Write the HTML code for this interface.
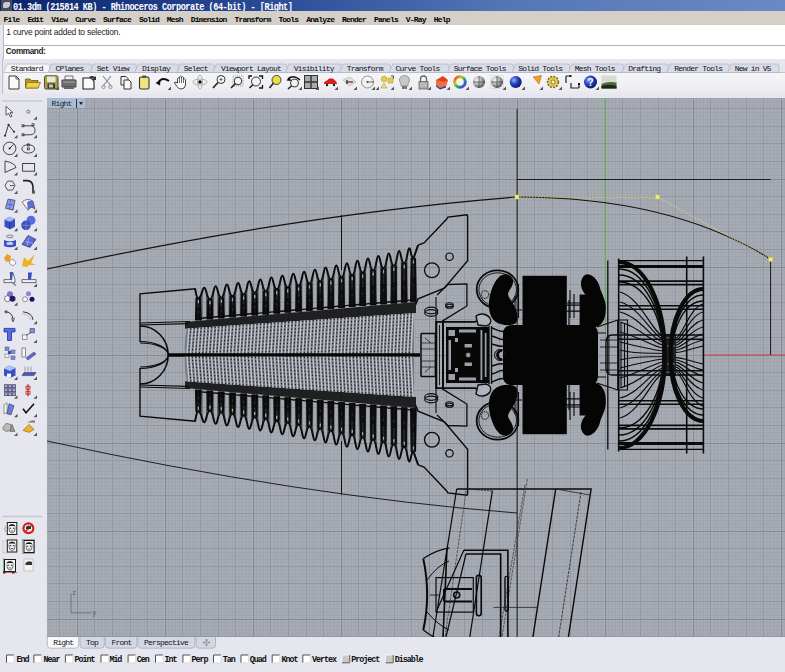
<!DOCTYPE html><html><head><meta charset="utf-8"><style>
*{margin:0;padding:0;box-sizing:border-box}
html,body{width:785px;height:672px;overflow:hidden;background:#e6e6ee;font-family:"Liberation Sans",sans-serif;position:relative}
.a{position:absolute;white-space:pre}
.m{font-family:"Liberation Mono",monospace}
#title{left:0;top:0;width:785px;height:11px;background:linear-gradient(90deg,#0a246a 0%,#2c4c98 35%,#5576b6 65%,#6a8ac4 100%)}
#menu{left:0;top:11px;width:785px;height:14px;background:#d4d0c8}
#cmd{left:3px;top:25px;width:782px;height:34px;background:#fff;border-left:1px solid #b8b8c0}
#vp{left:47px;top:98px;width:738px;height:538px;overflow:hidden}
.mt{font-size:8px;letter-spacing:-0.817px;color:#000;top:13.8px;font-weight:bold}
.tab{font-size:8px;letter-spacing:-0.8px;color:#111;top:63px}
.os{font-size:8px;letter-spacing:-0.8px;color:#111;top:653px}
.cb{width:8px;height:8px;border:1px solid #444;background:#fff;top:654px}
</style></head><body>
<div id="title" class="a"></div>
<div class="a" style="left:1px;top:0;width:11px;height:11px;background:#4a4a58"></div><div class="a" style="left:3px;top:2px;width:7px;height:6px;background:#c8c8d0;border-radius:3px 1px 4px 1px"></div>
<div class="a m" style="left:13px;top:2px;font-size:8.6px;font-weight:bold;letter-spacing:-0.5px;color:#fff;line-height:11px;transform:scaleY(1.2);transform-origin:0 0">01.3dm (215814 KB) - Rhinoceros Corporate (64-bit) - [Right]</div>
<div id="menu" class="a"></div>
<div class="a m mt" style="left:3.5px;line-height:11px">File  Edit  View  Curve  Surface  Solid  Mesh  Dimension  Transform  Tools  Analyze  Render  Panels  V-Ray  Help</div>
<div id="cmd" class="a"></div>
<div class="a" style="left:4px;top:44.5px;width:781px;height:1px;background:#b4b4bc"></div>
<div class="a" style="left:6.3px;top:27px;font-size:8.4px;letter-spacing:-0.2px;color:#222;line-height:10px">1 curve point added to selection.</div>
<div class="a" style="left:5.8px;top:46.8px;font-size:8.2px;font-weight:bold;letter-spacing:-0.4px;color:#222;line-height:10px">Command:</div>

<div class="a" style="left:3.5px;top:72.3px;width:782px;height:22px;background:linear-gradient(180deg,#f6f6f9 0%,#f0f0f4 60%,#e8e8ee 100%)"></div>
<div class="a" style="left:2px;top:58px;width:1.3px;height:36px;background:#c4c4cc"></div>
<svg class="a" style="left:0;top:0" width="785" height="672" viewBox="0 0 785 672">
<defs><clipPath id="vc"><rect x="47" y="98" width="738" height="539"/></clipPath></defs>
<path d="M3.5 72.5 L7 64 H47.7 Q49.7 64 49.7 66 V72.5Z" fill="#f6f6fa" stroke="#b4b8c8" stroke-width="0.8"/>
<path d="M48.2 72.5 L51.7 64 H89.7 Q91.7 64 91.7 66 V72.5Z" fill="#d9dce8" stroke="#b4b8c8" stroke-width="0.8"/>
<path d="M90.2 72.5 L93.7 64 H134.3 Q136.3 64 136.3 66 V72.5Z" fill="#d9dce8" stroke="#b4b8c8" stroke-width="0.8"/>
<path d="M134.8 72.5 L138.3 64 H176.3 Q178.3 64 178.3 66 V72.5Z" fill="#d9dce8" stroke="#b4b8c8" stroke-width="0.8"/>
<path d="M176.8 72.5 L180.3 64 H212.4 Q214.4 64 214.4 66 V72.5Z" fill="#d9dce8" stroke="#b4b8c8" stroke-width="0.8"/>
<path d="M212.9 72.5 L216.4 64 H285 Q287 64 287 66 V72.5Z" fill="#d9dce8" stroke="#b4b8c8" stroke-width="0.8"/>
<path d="M285.5 72.5 L289 64 H339 Q341 64 341 66 V72.5Z" fill="#d9dce8" stroke="#b4b8c8" stroke-width="0.8"/>
<path d="M339.5 72.5 L343 64 H388.7 Q390.7 64 390.7 66 V72.5Z" fill="#d9dce8" stroke="#b4b8c8" stroke-width="0.8"/>
<path d="M389.2 72.5 L392.7 64 H447 Q449 64 449 66 V72.5Z" fill="#d9dce8" stroke="#b4b8c8" stroke-width="0.8"/>
<path d="M447.5 72.5 L451 64 H511.5 Q513.5 64 513.5 66 V72.5Z" fill="#d9dce8" stroke="#b4b8c8" stroke-width="0.8"/>
<path d="M512.0 72.5 L515.5 64 H567.9 Q569.9 64 569.9 66 V72.5Z" fill="#d9dce8" stroke="#b4b8c8" stroke-width="0.8"/>
<path d="M568.4 72.5 L571.9 64 H621.6 Q623.6 64 623.6 66 V72.5Z" fill="#d9dce8" stroke="#b4b8c8" stroke-width="0.8"/>
<path d="M622.1 72.5 L625.6 64 H666.3 Q668.3 64 668.3 66 V72.5Z" fill="#d9dce8" stroke="#b4b8c8" stroke-width="0.8"/>
<path d="M666.8 72.5 L670.3 64 H727.2 Q729.2 64 729.2 66 V72.5Z" fill="#d9dce8" stroke="#b4b8c8" stroke-width="0.8"/>
<path d="M727.7 72.5 L731.2 64 H777 Q779 64 779 66 V72.5Z" fill="#d9dce8" stroke="#b4b8c8" stroke-width="0.8"/>
<path d="M49.7 72.5 H785" stroke="#b4b8c8" stroke-width="0.8"/>
<path d="M47.3 636.5 V645 Q47.3 648.2 50.3 648.2 H75.7 Q78.7 648.2 78.7 645 V636.5" fill="#f8f8fc" stroke="#a8acbc" stroke-width="0.8"/>
<path d="M80 636.5 V645 Q80 648.2 83 648.2 H101.2 Q104.2 648.2 104.2 645 V636.5" fill="#d4d8e4" stroke="#a8acbc" stroke-width="0.8"/>
<path d="M105.4 636.5 V645 Q105.4 648.2 108.4 648.2 H133.9 Q136.9 648.2 136.9 645 V636.5" fill="#d4d8e4" stroke="#a8acbc" stroke-width="0.8"/>
<path d="M138 636.5 V645 Q138 648.2 141 648.2 H192 Q195 648.2 195 645 V636.5" fill="#d4d8e4" stroke="#a8acbc" stroke-width="0.8"/>
<path d="M196 636.5 V645 Q196 648.2 199 648.2 H212.5 Q215.5 648.2 215.5 645 V636.5" fill="#d4d8e4" stroke="#a8acbc" stroke-width="0.8"/>
<path d="M203 642.5 H210 M206.5 639 V646" stroke="#888" stroke-width="1.6"/><circle cx="206.5" cy="642.5" r="1.6" fill="#bbb"/>
<rect x="6.5" y="655" width="7.5" height="7.8" fill="#fff"/>
<path d="M6.5 662.8 V655 H14" fill="none" stroke="#505050" stroke-width="1"/>
<path d="M14 655 V662.8 H6.5" fill="none" stroke="#d8d8e0" stroke-width="0.8"/>
<rect x="33.9" y="655" width="7.5" height="7.8" fill="#fff"/>
<path d="M33.9 662.8 V655 H41.4" fill="none" stroke="#505050" stroke-width="1"/>
<path d="M41.4 655 V662.8 H33.9" fill="none" stroke="#d8d8e0" stroke-width="0.8"/>
<rect x="65.4" y="655" width="7.5" height="7.8" fill="#fff"/>
<path d="M65.4 662.8 V655 H72.9" fill="none" stroke="#505050" stroke-width="1"/>
<path d="M72.9 655 V662.8 H65.4" fill="none" stroke="#d8d8e0" stroke-width="0.8"/>
<rect x="101.0" y="655" width="7.5" height="7.8" fill="#fff"/>
<path d="M101.0 662.8 V655 H108.5" fill="none" stroke="#505050" stroke-width="1"/>
<path d="M108.5 655 V662.8 H101.0" fill="none" stroke="#d8d8e0" stroke-width="0.8"/>
<rect x="128.1" y="655" width="7.5" height="7.8" fill="#fff"/>
<path d="M128.1 662.8 V655 H135.6" fill="none" stroke="#505050" stroke-width="1"/>
<path d="M135.6 655 V662.8 H128.1" fill="none" stroke="#d8d8e0" stroke-width="0.8"/>
<rect x="155.5" y="655" width="7.5" height="7.8" fill="#fff"/>
<path d="M155.5 662.8 V655 H163" fill="none" stroke="#505050" stroke-width="1"/>
<path d="M163 655 V662.8 H155.5" fill="none" stroke="#d8d8e0" stroke-width="0.8"/>
<rect x="182.9" y="655" width="7.5" height="7.8" fill="#fff"/>
<path d="M182.9 662.8 V655 H190.4" fill="none" stroke="#505050" stroke-width="1"/>
<path d="M190.4 655 V662.8 H182.9" fill="none" stroke="#d8d8e0" stroke-width="0.8"/>
<rect x="213.5" y="655" width="7.5" height="7.8" fill="#fff"/>
<path d="M213.5 662.8 V655 H221" fill="none" stroke="#505050" stroke-width="1"/>
<path d="M221 655 V662.8 H213.5" fill="none" stroke="#d8d8e0" stroke-width="0.8"/>
<rect x="241.0" y="655" width="7.5" height="7.8" fill="#fff"/>
<path d="M241.0 662.8 V655 H248.5" fill="none" stroke="#505050" stroke-width="1"/>
<path d="M248.5 655 V662.8 H241.0" fill="none" stroke="#d8d8e0" stroke-width="0.8"/>
<rect x="272.2" y="655" width="7.5" height="7.8" fill="#fff"/>
<path d="M272.2 662.8 V655 H279.7" fill="none" stroke="#505050" stroke-width="1"/>
<path d="M279.7 655 V662.8 H272.2" fill="none" stroke="#d8d8e0" stroke-width="0.8"/>
<rect x="302.8" y="655" width="7.5" height="7.8" fill="#fff"/>
<path d="M302.8 662.8 V655 H310.3" fill="none" stroke="#505050" stroke-width="1"/>
<path d="M310.3 655 V662.8 H302.8" fill="none" stroke="#d8d8e0" stroke-width="0.8"/>
<rect x="342" y="655" width="7.7" height="7.8" fill="#c8c8cc"/>
<path d="M342 662.8 V655 H349.7" fill="none" stroke="#fafafa" stroke-width="0.8"/>
<path d="M349.7 655 V662.8 H342" fill="none" stroke="#606060" stroke-width="1"/>
<rect x="385.5" y="655" width="7.7" height="7.8" fill="#c8c8cc"/>
<path d="M385.5 662.8 V655 H393.2" fill="none" stroke="#fafafa" stroke-width="0.8"/>
<path d="M393.2 655 V662.8 H385.5" fill="none" stroke="#606060" stroke-width="1"/>
<g clip-path="url(#vc)">
<rect x="47" y="98" width="738" height="539" fill="#a7abb3"/>
<path d="M45.50 98V637M49.50 98V637M52.50 98V637M56.50 98V637M63.50 98V637M66.50 98V637M70.50 98V637M73.50 98V637M80.50 98V637M84.50 98V637M87.50 98V637M91.50 98V637M98.50 98V637M101.50 98V637M105.50 98V637M108.50 98V637M116.50 98V637M119.50 98V637M123.50 98V637M126.50 98V637M133.50 98V637M137.50 98V637M140.50 98V637M144.50 98V637M151.50 98V637M154.50 98V637M158.50 98V637M161.50 98V637M168.50 98V637M172.50 98V637M175.50 98V637M179.50 98V637M186.50 98V637M189.50 98V637M193.50 98V637M196.50 98V637M204.50 98V637M207.50 98V637M211.50 98V637M214.50 98V637M221.50 98V637M225.50 98V637M228.50 98V637M232.50 98V637M239.50 98V637M242.50 98V637M246.50 98V637M249.50 98V637M256.50 98V637M260.50 98V637M263.50 98V637M267.50 98V637M274.50 98V637M277.50 98V637M281.50 98V637M284.50 98V637M292.50 98V637M295.50 98V637M299.50 98V637M302.50 98V637M309.50 98V637M313.50 98V637M316.50 98V637M320.50 98V637M327.50 98V637M330.50 98V637M334.50 98V637M337.50 98V637M344.50 98V637M348.50 98V637M351.50 98V637M355.50 98V637M362.50 98V637M365.50 98V637M369.50 98V637M372.50 98V637M380.50 98V637M383.50 98V637M387.50 98V637M390.50 98V637M397.50 98V637M401.50 98V637M404.50 98V637M408.50 98V637M415.50 98V637M418.50 98V637M422.50 98V637M425.50 98V637M432.50 98V637M436.50 98V637M439.50 98V637M443.50 98V637M450.50 98V637M453.50 98V637M457.50 98V637M460.50 98V637M468.50 98V637M471.50 98V637M475.50 98V637M478.50 98V637M485.50 98V637M489.50 98V637M492.50 98V637M496.50 98V637M503.50 98V637M506.50 98V637M510.50 98V637M513.50 98V637M520.50 98V637M524.50 98V637M527.50 98V637M531.50 98V637M538.50 98V637M541.50 98V637M545.50 98V637M548.50 98V637M556.50 98V637M559.50 98V637M563.50 98V637M566.50 98V637M573.50 98V637M577.50 98V637M580.50 98V637M584.50 98V637M591.50 98V637M594.50 98V637M598.50 98V637M601.50 98V637M608.50 98V637M612.50 98V637M615.50 98V637M619.50 98V637M626.50 98V637M629.50 98V637M633.50 98V637M636.50 98V637M644.50 98V637M647.50 98V637M651.50 98V637M654.50 98V637M661.50 98V637M665.50 98V637M668.50 98V637M672.50 98V637M679.50 98V637M682.50 98V637M686.50 98V637M689.50 98V637M696.50 98V637M700.50 98V637M703.50 98V637M707.50 98V637M714.50 98V637M717.50 98V637M721.50 98V637M724.50 98V637M732.50 98V637M735.50 98V637M739.50 98V637M742.50 98V637M749.50 98V637M753.50 98V637M756.50 98V637M760.50 98V637M767.50 98V637M770.50 98V637M774.50 98V637M777.50 98V637M784.50 98V637M788.50 98V637M47 94.50H785M47 98.50H785M47 101.50H785M47 105.50H785M47 112.50H785M47 115.50H785M47 119.50H785M47 122.50H785M47 129.50H785M47 133.50H785M47 136.50H785M47 140.50H785M47 147.50H785M47 150.50H785M47 154.50H785M47 157.50H785M47 164.50H785M47 168.50H785M47 171.50H785M47 175.50H785M47 182.50H785M47 186.50H785M47 189.50H785M47 193.50H785M47 200.50H785M47 203.50H785M47 207.50H785M47 210.50H785M47 217.50H785M47 221.50H785M47 224.50H785M47 228.50H785M47 235.50H785M47 238.50H785M47 242.50H785M47 245.50H785M47 252.50H785M47 256.50H785M47 259.50H785M47 263.50H785M47 270.50H785M47 274.50H785M47 277.50H785M47 281.50H785M47 288.50H785M47 291.50H785M47 295.50H785M47 298.50H785M47 305.50H785M47 309.50H785M47 312.50H785M47 316.50H785M47 323.50H785M47 326.50H785M47 330.50H785M47 333.50H785M47 340.50H785M47 344.50H785M47 347.50H785M47 351.50H785M47 358.50H785M47 362.50H785M47 365.50H785M47 369.50H785M47 376.50H785M47 379.50H785M47 383.50H785M47 386.50H785M47 393.50H785M47 397.50H785M47 400.50H785M47 404.50H785M47 411.50H785M47 414.50H785M47 418.50H785M47 421.50H785M47 428.50H785M47 432.50H785M47 435.50H785M47 439.50H785M47 446.50H785M47 450.50H785M47 453.50H785M47 457.50H785M47 464.50H785M47 467.50H785M47 471.50H785M47 474.50H785M47 481.50H785M47 485.50H785M47 488.50H785M47 492.50H785M47 499.50H785M47 502.50H785M47 506.50H785M47 509.50H785M47 516.50H785M47 520.50H785M47 523.50H785M47 527.50H785M47 534.50H785M47 538.50H785M47 541.50H785M47 545.50H785M47 552.50H785M47 555.50H785M47 559.50H785M47 562.50H785M47 569.50H785M47 573.50H785M47 576.50H785M47 580.50H785M47 587.50H785M47 590.50H785M47 594.50H785M47 597.50H785M47 604.50H785M47 608.50H785M47 611.50H785M47 615.50H785M47 622.50H785M47 626.50H785M47 629.50H785M47 633.50H785M47 640.50H785" stroke="#a0a4ac" stroke-width="1" fill="none"/>
<path d="M42.50 98V637M59.50 98V637M94.50 98V637M112.50 98V637M130.50 98V637M147.50 98V637M182.50 98V637M200.50 98V637M218.50 98V637M235.50 98V637M270.50 98V637M288.50 98V637M306.50 98V637M323.50 98V637M358.50 98V637M376.50 98V637M394.50 98V637M411.50 98V637M446.50 98V637M464.50 98V637M482.50 98V637M499.50 98V637M534.50 98V637M552.50 98V637M570.50 98V637M587.50 98V637M622.50 98V637M640.50 98V637M658.50 98V637M675.50 98V637M710.50 98V637M728.50 98V637M746.50 98V637M763.50 98V637M798.50 98V637M47 108.50H785M47 126.50H785M47 143.50H785M47 161.50H785M47 196.50H785M47 214.50H785M47 231.50H785M47 249.50H785M47 284.50H785M47 302.50H785M47 319.50H785M47 337.50H785M47 372.50H785M47 390.50H785M47 407.50H785M47 425.50H785M47 460.50H785M47 478.50H785M47 495.50H785M47 513.50H785M47 548.50H785M47 566.50H785M47 583.50H785M47 601.50H785M47 636.50H785M47 654.50H785" stroke="#93979f" stroke-width="1" fill="none"/>
<path d="M77.50 98V637M165.50 98V637M253.50 98V637M341.50 98V637M429.50 98V637M517.50 98V637M605.50 98V637M693.50 98V637M781.50 98V637M47 91.50H785M47 179.50H785M47 267.50H785M47 355.50H785M47 443.50H785M47 531.50H785M47 619.50H785" stroke="#888c95" stroke-width="1" fill="none"/>
<path d="M605.3 98V330" stroke="#5cae5c" stroke-width="1.2"/>
<path d="M704 355.0H785" stroke="#c84040" stroke-width="1.2"/>
<path d="M47 269 Q 300 214 517 197" stroke="#111" fill="none" stroke-width="1.2"/>
<path d="M47 441 Q 300 496 517 513" stroke="#111" fill="none" stroke-width="0.9"/>
<path d="M517 197 C 610 197 700 215 770.6 259.3" stroke="#111" fill="none" stroke-width="1.1"/>
<path d="M517.1 108.9V637" stroke="#1a1a1a" fill="none" stroke-width="1"/>
<path d="M517 179.5H770.6" stroke="#1a1a1a" fill="none" stroke-width="1"/>
<path d="M770.6 259.3V355" stroke="#1a1a1a" fill="none" stroke-width="1"/>
<path d="M341.5 215V270M341.5 441V495" stroke="#111" fill="none" stroke-width="1"/>
<path d="M517 197 L657.5 197 L770.6 259.3" stroke="#e8e860" stroke-width="0.8" stroke-dasharray="1.5 1.5" fill="none"/>
<rect x="515" y="195" width="4" height="4" fill="#f0f070" stroke="#c8c850" stroke-width="0.5"/>
<rect x="655.5" y="195" width="4" height="4" fill="#f0f070" stroke="#c8c850" stroke-width="0.5"/>
<rect x="768.6" y="257.3" width="4" height="4" fill="#f0f070" stroke="#c8c850" stroke-width="0.5"/>
<path d="M71 593.4 V612.8 H91.2" fill="none" stroke="#6a6e78" stroke-width="0.9"/>
<text x="72.5" y="594.5" font-family="Liberation Sans" font-size="6.5" fill="#5a5e68">z</text>
<text x="92.5" y="614.5" font-family="Liberation Sans" font-size="7" fill="#5a5e68">y</text>
<g id="uh"><path d="M195.5 288.8 L140 293.8 L140 342" stroke="#0a0a0a" fill="none" stroke-width="1.4"/>
<path d="M140 323 L190 321.5 M140 325 L188 323.6" stroke="#0a0a0a" fill="none" stroke-width="1.1"/>
<path d="M140 326 A28.2 29 0 0 1 168.2 355" stroke="#0a0a0a" fill="none" stroke-width="1.5"/>
<path d="M140 341.5 A28.2 13.5 0 0 1 168.2 355 M140 343 A28.2 12 0 0 1 168.2 355" stroke="#0a0a0a" fill="none" stroke-width="1.1"/>
<path d="M194.9 288.75 C196 290 195.80 298.30 198.30 298.30 C202.02 298.30 201.90 287.70 204.30 287.70 C206.56 287.70 206.45 299.20 209.96 299.20 C213.47 299.20 213.36 286.17 215.62 286.17 C217.87 286.17 217.76 297.71 221.25 297.71 C224.74 297.71 224.63 284.58 226.88 284.58 C229.12 284.58 229.01 296.16 232.48 296.16 C235.96 296.16 235.84 282.93 238.08 282.93 C240.31 282.93 240.20 294.55 243.66 294.55 C247.11 294.55 247.00 281.22 249.23 281.22 C251.44 281.22 251.33 292.88 254.77 292.88 C258.21 292.88 258.10 279.45 260.31 279.45 C262.52 279.45 262.41 291.15 265.83 291.15 C269.24 291.15 269.13 277.62 271.34 277.62 C273.53 277.62 273.42 289.35 276.82 289.35 C280.22 289.35 280.11 275.73 282.30 275.73 C284.49 275.73 284.38 287.50 287.76 287.50 C291.14 287.50 291.03 273.78 293.21 273.78 C295.38 273.78 295.27 285.59 298.64 285.59 C302.00 285.59 301.89 271.77 304.06 271.77 C306.22 271.77 306.11 283.62 309.46 283.62 C312.80 283.62 312.69 269.70 314.85 269.70 C317.00 269.70 316.89 281.59 320.22 281.59 C323.54 281.59 323.43 267.57 325.58 267.57 C327.71 267.57 327.61 279.50 330.92 279.50 C334.22 279.50 334.12 265.38 336.25 265.38 C338.37 265.38 338.27 277.34 341.56 277.34 C344.85 277.34 344.74 263.13 346.86 263.13 C348.98 263.13 348.87 275.13 352.14 275.13 C355.41 275.13 355.31 260.82 357.42 260.82 C359.52 260.82 359.41 272.86 362.67 272.86 C365.92 272.86 365.81 258.45 367.91 258.45 C370.00 258.45 369.90 270.53 373.13 270.53 C376.37 270.53 376.26 256.02 378.35 256.02 C380.42 256.02 380.32 268.14 383.54 268.14 C386.75 268.14 386.65 253.53 388.72 253.53 C390.79 253.53 390.68 265.69 393.88 265.69 C397.08 265.69 396.98 250.98 399.04 250.98 C401.09 250.98 400.99 263.18 404.17 263.18 C407.35 263.18 407.25 248.37 409.30 248.37 C410.94 248.37 410.86 258.60 413.40 258.60 L418.1 245.2" stroke="#0a0a0a" fill="none" stroke-width="2"/>
<path d="M196.40 297.80L195.90 320.22M200.20 297.80L200.70 320.22M208.06 298.70L207.56 319.21M211.86 298.70L212.36 319.21M219.35 297.21L218.85 318.24M223.15 297.21L223.65 318.24M230.58 295.66L230.08 317.28M234.38 295.66L234.88 317.28M241.76 294.05L241.26 316.32M245.56 294.05L246.06 316.32M252.87 292.38L252.37 315.36M256.67 292.38L257.17 315.36M263.93 290.65L263.43 314.41M267.73 290.65L268.23 314.41M274.92 288.85L274.42 313.47M278.72 288.85L279.22 313.47M285.86 287.00L285.36 312.53M289.66 287.00L290.16 312.53M296.74 285.09L296.24 311.59M300.54 285.09L301.04 311.59M307.56 283.12L307.06 310.66M311.36 283.12L311.86 310.66M318.32 281.09L317.82 309.73M322.12 281.09L322.62 309.73M329.02 279.00L328.52 308.81M332.82 279.00L333.32 308.81M339.66 276.84L339.16 307.90M343.46 276.84L343.96 307.90M350.24 274.63L349.74 306.99M354.04 274.63L354.54 306.99M360.77 272.36L360.27 306.09M364.57 272.36L365.07 306.09M371.23 270.03L370.73 305.19M375.03 270.03L375.53 305.19M381.64 267.64L381.14 304.29M385.44 267.64L385.94 304.29M391.98 265.19L391.48 303.40M395.78 265.19L396.28 303.40M402.27 262.68L401.77 302.52M406.07 262.68L406.57 302.52M411.50 258.10L411.00 301.72M415.30 258.10L415.80 301.72" stroke="#0a0a0a" fill="none" stroke-width="1.6"/>
<path d="M196.40 299.30L200.20 299.30L200.90 320.22L195.70 320.22ZM208.06 300.20L211.86 300.20L212.56 319.21L207.36 319.21ZM219.35 298.71L223.15 298.71L223.85 318.24L218.65 318.24ZM230.58 297.16L234.38 297.16L235.08 317.28L229.88 317.28ZM241.76 295.55L245.56 295.55L246.26 316.32L241.06 316.32ZM252.87 293.88L256.67 293.88L257.37 315.36L252.17 315.36ZM263.93 292.15L267.73 292.15L268.43 314.41L263.23 314.41ZM274.92 290.35L278.72 290.35L279.42 313.47L274.22 313.47ZM285.86 288.50L289.66 288.50L290.36 312.53L285.16 312.53ZM296.74 286.59L300.54 286.59L301.24 311.59L296.04 311.59ZM307.56 284.62L311.36 284.62L312.06 310.66L306.86 310.66ZM318.32 282.59L322.12 282.59L322.82 309.73L317.62 309.73ZM329.02 280.50L332.82 280.50L333.52 308.81L328.32 308.81ZM339.66 278.34L343.46 278.34L344.16 307.90L338.96 307.90ZM350.24 276.13L354.04 276.13L354.74 306.99L349.54 306.99ZM360.77 273.86L364.57 273.86L365.27 306.09L360.07 306.09ZM371.23 271.53L375.03 271.53L375.73 305.19L370.53 305.19ZM381.64 269.14L385.44 269.14L386.14 304.29L380.94 304.29ZM391.98 266.69L395.78 266.69L396.48 303.40L391.28 303.40ZM402.27 264.18L406.07 264.18L406.77 302.52L401.57 302.52ZM411.50 259.60L415.30 259.60L416.00 301.72L410.80 301.72Z" fill="#0a0a0a" opacity="0.82"/>
<path d="M197.50 300.30H199.10V303.30H197.50ZM197.80 310.85H198.80V313.35H197.80ZM209.16 301.20H210.76V304.20H209.16ZM209.46 310.61H210.46V313.11H209.46ZM220.45 299.71H222.05V302.71H220.45ZM220.75 309.43H221.75V311.93H220.75ZM231.68 298.16H233.28V301.16H231.68ZM231.98 308.23H232.98V310.73H231.98ZM242.86 296.55H244.46V299.55H242.86ZM243.16 307.01H244.16V309.51H243.16ZM253.97 294.88H255.57V297.88H253.97ZM254.27 305.77H255.27V308.27H254.27ZM265.03 293.15H266.63V296.15H265.03ZM265.33 304.50H266.33V307.00H265.33ZM276.02 291.35H277.62V294.35H276.02ZM276.32 303.22H277.32V305.72H276.32ZM286.96 289.50H288.56V292.50H286.96ZM287.26 301.92H288.26V304.42H287.26ZM297.84 287.59H299.44V290.59H297.84ZM298.14 300.59H299.14V303.09H298.14ZM308.66 285.62H310.26V288.62H308.66ZM308.96 299.24H309.96V301.74H308.96ZM319.42 283.59H321.02V286.59H319.42ZM319.72 297.88H320.72V300.38H319.72ZM330.12 281.50H331.72V284.50H330.12ZM330.42 296.49H331.42V298.99H330.42ZM340.76 279.34H342.36V282.34H340.76ZM341.06 295.08H342.06V297.58H341.06ZM351.34 277.13H352.94V280.13H351.34ZM351.64 293.65H352.64V296.15H351.64ZM361.87 274.86H363.47V277.86H361.87ZM362.17 292.20H363.17V294.70H362.17ZM372.33 272.53H373.93V275.53H372.33ZM372.63 290.72H373.63V293.22H372.63ZM382.74 270.14H384.34V273.14H382.74ZM383.04 289.23H384.04V291.73H383.04ZM393.08 267.69H394.68V270.69H393.08ZM393.38 287.72H394.38V290.22H393.38ZM403.37 265.18H404.97V268.18H403.37ZM403.67 286.18H404.67V288.68H403.67ZM412.60 260.60H414.20V263.60H412.60ZM412.90 283.87H413.90V286.37H412.90Z" fill="#a4a8b0"/>
<path d="M202.10 294.70V318.70M206.50 294.70V318.70M213.42 293.17V317.73M217.82 293.17V317.73M224.68 291.58V316.76M229.08 291.58V316.76M235.88 289.93V315.80M240.28 289.93V315.80M247.03 288.22V314.84M251.43 288.22V314.84M258.11 286.45V313.88M262.51 286.45V313.88M269.14 284.62V312.94M273.54 284.62V312.94M280.10 282.73V311.99M284.50 282.73V311.99M291.01 280.78V311.06M295.41 280.78V311.06M301.86 278.77V310.12M306.26 278.77V310.12M312.65 276.70V309.20M317.05 276.70V309.20M323.38 274.57V308.27M327.78 274.57V308.27M334.05 272.38V307.36M338.45 272.38V307.36M344.66 270.13V306.44M349.06 270.13V306.44M355.22 267.82V305.54M359.62 267.82V305.54M365.71 265.45V304.63M370.11 265.45V304.63M376.15 263.02V303.74M380.55 263.02V303.74M386.52 260.53V302.84M390.92 260.53V302.84M396.84 257.98V301.96M401.24 257.98V301.96M407.10 255.37V301.08M411.50 255.37V301.08" stroke="#1a1a1a" fill="none" stroke-width="0.7" opacity="0.6"/>
<path d="M196.60 298.30L196.10 320.22M200.00 298.30L200.50 320.22M208.26 299.20L207.76 319.21M211.66 299.20L212.16 319.21M219.55 297.71L219.05 318.24M222.95 297.71L223.45 318.24M230.78 296.16L230.28 317.28M234.18 296.16L234.68 317.28M241.96 294.55L241.46 316.32M245.36 294.55L245.86 316.32M253.07 292.88L252.57 315.36M256.47 292.88L256.97 315.36M264.13 291.15L263.63 314.41M267.53 291.15L268.03 314.41M275.12 289.35L274.62 313.47M278.52 289.35L279.02 313.47M286.06 287.50L285.56 312.53M289.46 287.50L289.96 312.53M296.94 285.59L296.44 311.59M300.34 285.59L300.84 311.59M307.76 283.62L307.26 310.66M311.16 283.62L311.66 310.66M318.52 281.59L318.02 309.73M321.92 281.59L322.42 309.73M329.22 279.50L328.72 308.81M332.62 279.50L333.12 308.81M339.86 277.34L339.36 307.90M343.26 277.34L343.76 307.90M350.44 275.13L349.94 306.99M353.84 275.13L354.34 306.99M360.97 272.86L360.47 306.09M364.37 272.86L364.87 306.09M371.43 270.53L370.93 305.19M374.83 270.53L375.33 305.19M381.84 268.14L381.34 304.29M385.24 268.14L385.74 304.29M392.18 265.69L391.68 303.40M395.58 265.69L396.08 303.40M402.47 263.18L401.97 302.52M405.87 263.18L406.37 302.52M411.70 258.60L411.20 301.72M415.10 258.60L415.60 301.72" stroke="#0a0a0a" fill="none" stroke-width="1.7"/>
<path d="M196.40 307.71L200.20 307.71L200.90 320.22L195.70 320.22ZM208.06 307.76L211.86 307.76L212.56 319.21L207.36 319.21ZM219.35 306.50L223.15 306.50L223.85 318.24L218.65 318.24ZM230.58 305.21L234.38 305.21L235.08 317.28L229.88 317.28ZM241.76 303.89L245.56 303.89L246.26 316.32L241.06 316.32ZM252.87 302.55L256.67 302.55L257.37 315.36L252.17 315.36ZM263.93 301.16L267.73 301.16L268.43 314.41L263.23 314.41ZM274.92 299.75L278.72 299.75L279.42 313.47L274.22 313.47ZM285.86 298.31L289.66 298.31L290.36 312.53L285.16 312.53ZM296.74 296.84L300.54 296.84L301.24 311.59L296.04 311.59ZM307.56 295.34L311.36 295.34L312.06 310.66L306.86 310.66ZM318.32 293.80L322.12 293.80L322.82 309.73L317.62 309.73ZM329.02 292.24L332.82 292.24L333.52 308.81L328.32 308.81ZM339.66 290.64L343.46 290.64L344.16 307.90L338.96 307.90ZM350.24 289.02L354.04 289.02L354.74 306.99L349.54 306.99ZM360.77 287.36L364.57 287.36L365.27 306.09L360.07 306.09ZM371.23 285.67L375.03 285.67L375.73 305.19L370.53 305.19ZM381.64 283.96L385.44 283.96L386.14 304.29L380.94 304.29ZM391.98 282.21L395.78 282.21L396.48 303.40L391.28 303.40ZM402.27 280.43L406.07 280.43L406.77 302.52L401.57 302.52ZM411.50 277.56L415.30 277.56L416.00 301.72L410.80 301.72Z" fill="#0a0a0a" opacity="0.75"/>
<path d="M201.70 293.70V318.70M206.90 293.70V318.70M213.02 292.17V317.73M218.22 292.17V317.73M224.28 290.58V316.76M229.48 290.58V316.76M235.48 288.93V315.80M240.68 288.93V315.80M246.63 287.22V314.84M251.83 287.22V314.84M257.71 285.45V313.88M262.91 285.45V313.88M268.74 283.62V312.94M273.94 283.62V312.94M279.70 281.73V311.99M284.90 281.73V311.99M290.61 279.78V311.06M295.81 279.78V311.06M301.46 277.77V310.12M306.66 277.77V310.12M312.25 275.70V309.20M317.45 275.70V309.20M322.98 273.57V308.27M328.18 273.57V308.27M333.65 271.38V307.36M338.85 271.38V307.36M344.26 269.13V306.44M349.46 269.13V306.44M354.82 266.82V305.54M360.02 266.82V305.54M365.31 264.45V304.63M370.51 264.45V304.63M375.75 262.02V303.74M380.95 262.02V303.74M386.12 259.53V302.84M391.32 259.53V302.84M396.44 256.98V301.96M401.64 256.98V301.96M406.70 254.37V301.08M411.90 254.37V301.08" stroke="#1a1a1a" fill="none" stroke-width="0.7" opacity="0.7"/>
<path d="M198.30 319.72 Q204.13 316.22 209.96 318.71M209.96 318.71 Q215.61 315.23 221.25 317.74M221.25 317.74 Q226.87 314.26 232.48 316.78M232.48 316.78 Q238.07 313.30 243.66 315.82M243.66 315.82 Q249.21 312.34 254.77 314.86M254.77 314.86 Q260.30 311.39 265.83 313.91M265.83 313.91 Q271.32 310.44 276.82 312.97M276.82 312.97 Q282.29 309.50 287.76 312.03M287.76 312.03 Q293.20 308.56 298.64 311.09M298.64 311.09 Q304.05 307.63 309.46 310.16M309.46 310.16 Q314.84 306.70 320.22 309.23M320.22 309.23 Q325.57 305.77 330.92 308.31M330.92 308.31 Q336.24 304.86 341.56 307.40M341.56 307.40 Q346.85 303.95 352.14 306.49M352.14 306.49 Q357.40 303.04 362.67 305.59M362.67 305.59 Q367.90 302.14 373.13 304.69M373.13 304.69 Q378.33 301.24 383.54 303.79M383.54 303.79 Q388.71 300.35 393.88 302.90M393.88 302.90 Q399.03 299.46 404.17 302.02M404.17 302.02 Q408.79 298.62 413.40 301.22" stroke="#0a0a0a" fill="none" stroke-width="1.4"/>
<path d="M185 321.9 L416 302.0 L416 313.0 L185 328.7Z" fill="#080808" opacity="0.85"/>
<path d="M187 328.5 L414 313.1 L414 354 L185 354 Q184 340 187 328.5Z" fill="#767a82"/>
<path d="M189.00 328.41L187.00 354M192.50 328.17L190.50 354M196.00 327.93L194.00 354M199.50 327.69L197.50 354M203.00 327.46L201.00 354M206.50 327.22L204.50 354M210.00 326.98L208.00 354M213.50 326.74L211.50 354M217.00 326.51L215.00 354M220.50 326.27L218.50 354M224.00 326.03L222.00 354M227.50 325.79L225.50 354M231.00 325.56L229.00 354M234.50 325.32L232.50 354M238.00 325.08L236.00 354M241.50 324.84L239.50 354M245.00 324.61L243.00 354M248.50 324.37L246.50 354M252.00 324.13L250.00 354M255.50 323.89L253.50 354M259.00 323.66L257.00 354M262.50 323.42L260.50 354M266.00 323.18L264.00 354M269.50 322.94L267.50 354M273.00 322.71L271.00 354M276.50 322.47L274.50 354M280.00 322.23L278.00 354M283.50 321.99L281.50 354M287.00 321.76L285.00 354M290.50 321.52L288.50 354M294.00 321.28L292.00 354M297.50 321.04L295.50 354M301.00 320.81L299.00 354M304.50 320.57L302.50 354M308.00 320.33L306.00 354M311.50 320.09L309.50 354M315.00 319.86L313.00 354M318.50 319.62L316.50 354M322.00 319.38L320.00 354M325.50 319.14L323.50 354M329.00 318.90L327.00 354M332.50 318.67L330.50 354M336.00 318.43L334.00 354M339.50 318.19L337.50 354M343.00 317.95L341.00 354M346.50 317.72L344.50 354M350.00 317.48L348.00 354M353.50 317.24L351.50 354M357.00 317.00L355.00 354M360.50 316.77L358.50 354M364.00 316.53L362.00 354M367.50 316.29L365.50 354M371.00 316.05L369.00 354M374.50 315.82L372.50 354M378.00 315.58L376.00 354M381.50 315.34L379.50 354M385.00 315.10L383.00 354M388.50 314.87L386.50 354M392.00 314.63L390.00 354M395.50 314.39L393.50 354M399.00 314.15L397.00 354M402.50 313.92L400.50 354M406.00 313.68L404.00 354M409.50 313.44L407.50 354M413.00 313.20L411.00 354" stroke="#c4c8d0" stroke-width="1.4" fill="none"/>
<path d="M190.75 328.29L188.75 354M194.25 328.05L192.25 354M197.75 327.81L195.75 354M201.25 327.58L199.25 354M204.75 327.34L202.75 354M208.25 327.10L206.25 354M211.75 326.86L209.75 354M215.25 326.63L213.25 354M218.75 326.39L216.75 354M222.25 326.15L220.25 354M225.75 325.91L223.75 354M229.25 325.68L227.25 354M232.75 325.44L230.75 354M236.25 325.20L234.25 354M239.75 324.96L237.75 354M243.25 324.73L241.25 354M246.75 324.49L244.75 354M250.25 324.25L248.25 354M253.75 324.01L251.75 354M257.25 323.77L255.25 354M260.75 323.54L258.75 354M264.25 323.30L262.25 354M267.75 323.06L265.75 354M271.25 322.82L269.25 354M274.75 322.59L272.75 354M278.25 322.35L276.25 354M281.75 322.11L279.75 354M285.25 321.87L283.25 354M288.75 321.64L286.75 354M292.25 321.40L290.25 354M295.75 321.16L293.75 354M299.25 320.92L297.25 354M302.75 320.69L300.75 354M306.25 320.45L304.25 354M309.75 320.21L307.75 354M313.25 319.97L311.25 354M316.75 319.74L314.75 354M320.25 319.50L318.25 354M323.75 319.26L321.75 354M327.25 319.02L325.25 354M330.75 318.79L328.75 354M334.25 318.55L332.25 354M337.75 318.31L335.75 354M341.25 318.07L339.25 354M344.75 317.84L342.75 354M348.25 317.60L346.25 354M351.75 317.36L349.75 354M355.25 317.12L353.25 354M358.75 316.89L356.75 354M362.25 316.65L360.25 354M365.75 316.41L363.75 354M369.25 316.17L367.25 354M372.75 315.94L370.75 354M376.25 315.70L374.25 354M379.75 315.46L377.75 354M383.25 315.22L381.25 354M386.75 314.99L384.75 354M390.25 314.75L388.25 354M393.75 314.51L391.75 354M397.25 314.27L395.25 354M400.75 314.04L398.75 354M404.25 313.80L402.25 354M407.75 313.56L405.75 354M411.25 313.32L409.25 354" stroke="#1a1a1a" stroke-width="1.1" stroke-dasharray="1.3 2.2" fill="none"/>
<path d="M168 355 H420" stroke="#050505" stroke-width="2.8"/>
<path d="M418.1 245.2 L424 242.9 L446.7 219 L447.9 217.1 L466.9 214.8 L467.6 216 L467.6 260.7 L444.3 288.1 L418.1 298.8 L415.7 304.8" stroke="#0a0a0a" fill="none" stroke-width="1.4"/>
<circle cx="431.9" cy="270.2" r="7.4" stroke="#0a0a0a" fill="none" stroke-width="1.3"/>
<circle cx="449.5" cy="256.7" r="3.7" stroke="#0a0a0a" fill="none" stroke-width="1.2"/>
<path d="M437 295 L447.9 284.5 L466.9 283.8 L466.9 306 L441.9 321.4" stroke="#0a0a0a" fill="none" stroke-width="1.3"/>
<path d="M436 297 V355 M442.7 321.3 V355" stroke="#0a0a0a" fill="none" stroke-width="1.1"/>
<ellipse cx="449.5" cy="304.8" rx="3.8" ry="2" stroke="#0a0a0a" fill="none" stroke-width="1.1"/><ellipse cx="449.5" cy="306.3" rx="3.8" ry="2" stroke="#0a0a0a" fill="none" stroke-width="1.1"/>
<ellipse cx="431.2" cy="310.5" rx="6.5" ry="3.3" stroke="#0a0a0a" fill="none" stroke-width="1.2"/><ellipse cx="431.2" cy="313" rx="6.5" ry="3.3" stroke="#0a0a0a" fill="none" stroke-width="1.2"/>
<path d="M421 333.6 H435.4 V355 M421 333.6 V355" stroke="#0a0a0a" fill="none" stroke-width="1.5"/>
<path d="M421 343 H435 M421 349 H435 M425 338 L431 343" stroke="#222" fill="none" stroke-width="0.8"/>
<path d="M436.3 321.3 V355 M443 321.3 V355" stroke="#0a0a0a" fill="none" stroke-width="2.0"/>
<path d="M439.5 325 V355" stroke="#0a0a0a" fill="none" stroke-width="0.9"/>
<path d="M435.6 321.8 H475 C478 321 480 317 483 314.8" stroke="#0a0a0a" fill="none" stroke-width="1.8"/>
<path d="M476 316 C480 313 486 313 490 318 C492 322 490 325 486 326 L478 325Z" fill="#b0b4bc" stroke="#111" stroke-width="1.4"/>
<path d="M446 327 H489 V355 H446Z" fill="#080808"/>
<path d="M448.5 330 H455 V336 H448.5Z M459 329.5 H476 V332.5 H459Z M464.6 344 H471.9 V347.5 H464.6Z M448.5 340 H451 V355 H448.5Z M480.5 330 H482.3 V355 H480.5Z M484.8 333 H486.5 V355 H484.8Z M455 338 H458 V342 H455Z" fill="#9ca0a8"/>
<circle cx="468.2" cy="355" r="2.6" fill="#9ca0a8" stroke="#111" stroke-width="0.8"/>
<path d="M492 328 C497 330 501 333 505 331 M492 336 C497 337 500 341 504 339 M492 344 C496 345 499 347 503 346" stroke="#0a0a0a" fill="none" stroke-width="1.4"/>
<path d="M489 326 V355 M491.5 326 V355" stroke="#0a0a0a" fill="none" stroke-width="1.3"/>
<circle cx="500" cy="355" r="5.5" fill="none" stroke="#222" stroke-width="0.9"/><path d="M502 350.5 A4.5 4.5 0 1 0 502 359.5" fill="none" stroke="#0a0a0a" stroke-width="2.4"/>
<ellipse cx="497.5" cy="289.3" rx="20.8" ry="19" stroke="#0a0a0a" fill="none" stroke-width="1.8"/>
<ellipse cx="497.7" cy="289.6" rx="18.8" ry="16.8" stroke="#0a0a0a" fill="none" stroke-width="0.9"/>
<path d="M505.7 274.3 C510 274.5 514 278 513 283 C512 288 508 291 508 294.5 C509 299 514 303 516.4 311 C518 316 518 320 516 323 C512 326 502 326 496 322 C490 318 488.5 310 489 301.7 C490 292 494 281 500 276 C502 274.8 504 274.3 505.7 274.3Z" fill="#050505"/>
<circle cx="485" cy="294.5" r="3.8" fill="none" stroke="#333" stroke-width="1.3" stroke-dasharray="1.2 0.8"/>
<path d="M587.4 274.3 C594 274.5 599 282 600.5 289.8 C603 296 606 302 605.8 307.6 C606 313 605 317 604 319.5 C602 324 599 326.5 595.7 327 L579.6 327 V294.5 H585.6 C582 291 580 285 581.4 280.2 C582.5 276.5 585 274.3 587.4 274.3Z" fill="#050505"/>
<path d="M566.5 305.2 H580 M566.5 311.2 H580 M569 300 V327" stroke="#0a0a0a" fill="none" stroke-width="1.2"/>
<rect x="522.5" y="275.8" width="44.3" height="80" fill="#050505"/>
<path d="M503 355 V334 Q503 325 512 325 H589 Q598 325 598 334 V355Z" fill="#050505"/>
<path d="M518.5 284 V318 M515 296 V318 M570 290 V318 M574 294 V318 M567 303 H580 M515 310 H522" stroke="#0a0a0a" fill="none" stroke-width="1.1"/>
<path d="M597 327 L617.7 320 M597.5 333 L606 333" stroke="#0a0a0a" fill="none" stroke-width="1.2"/>
<path d="M617.7 320 H627.5 V355 M617.7 320 V355 M621 323 V355 M624.5 323 V355" stroke="#0a0a0a" fill="none" stroke-width="1.1"/>
<path d="M606 355 V343 Q606 335 612 335 H617.7" stroke="#0a0a0a" fill="none" stroke-width="1.3"/>
<path d="M600 340 H617 M600 347 H617 M609 336 V355" stroke="#0a0a0a" fill="none" stroke-width="0.8"/>
<path d="M607.8 260.6 V355" stroke="#0a0a0a" fill="none" stroke-width="1.3"/>
<path d="M618.7 258.5 V355 M703.4 256.5 V355 M686.7 256.5 V355" stroke="#0a0a0a" fill="none" stroke-width="1.6"/>
<path d="M618.7 260.6 H703.4" stroke="#0a0a0a" fill="none" stroke-width="1.4"/>
<path d="M618.7 266.4 H703.4" stroke="#0a0a0a" fill="none" stroke-width="3"/>
<path d="M618.7 281.1 H703.4 M618.7 284.6 H703.4" stroke="#0a0a0a" fill="none" stroke-width="1.8"/>
<path d="M618.7 305.7 H703.4 M618.7 309.2 H703.4" stroke="#0a0a0a" fill="none" stroke-width="1.5"/>
<path d="M618.7 335 H703.4 M618.7 339.2 H703.4" stroke="#0a0a0a" fill="none" stroke-width="1.6"/>
<path d="M662 334 H676 V355 H662Z" fill="#0a0a0a" opacity="0.85"/>
<path d="M663 338 H675 M663 346 H675" stroke="#8a8e96" stroke-width="0.8"/>
<path d="M619 262 A46 93 0 0 1 665 355" stroke="#0a0a0a" fill="none" stroke-width="4"/>
<path d="M619 269 A45 86 0 0 1 664 355 M619 275 A44.5 80 0 0 1 663.5 355 M619 282 A44 73 0 0 1 663 355 " stroke="#0a0a0a" fill="none" stroke-width="1.4"/>
<path d="M620 292 C640 297 654 335 663 336 M620 302 C640 307 654 338 663 339 M620 312 C640 317 654 341 663 342 M620 322 C640 327 654 344 663 345 M620 332 C640 337 654 347 663 348 M620 342 C640 347 654 350 663 351 M620 350 C640 355 654 352.5 663 353.5 " stroke="#0a0a0a" fill="none" stroke-width="1.2"/>
<path d="M703.4 289 A33 66 0 0 0 670.4 355" stroke="#0a0a0a" fill="none" stroke-width="4.2"/>
<path d="M703.4 295 A32 60 0 0 0 671.4 355 M703.4 301 A31.5 54 0 0 0 671.9 355 " stroke="#0a0a0a" fill="none" stroke-width="1.3"/>
<path d="M703 304 C690 307 682 337.0 676 338.0 M703 312 C690 315 682 339.6 676 340.4 M703 320 C690 323 682 342.2 676 342.8 M703 327 C690 330 682 344.8 676 345.2 M703 334 C690 337 682 347.4 676 347.6 M703 340 C690 343 682 350.0 676 350.0 M703 346 C690 349 682 352.6 676 352.4 " stroke="#0a0a0a" fill="none" stroke-width="1.2"/></g>
<use href="#uh" transform="matrix(1 0 0 -1 0 710)"/>
<path d="M456.7 489 H591.1 L568.4 637" stroke="#0a0a0a" fill="none" stroke-width="1.4"/>
<path d="M555.7 489 L532.9 637" stroke="#0a0a0a" fill="none" stroke-width="1.4"/>
<path d="M581 492 L558.7 637" stroke="#222" fill="none" stroke-width="0.8" stroke-dasharray="3 1"/>
<path d="M556 489 L590 495" stroke="#222" fill="none" stroke-width="0.8"/>
<path d="M527.3 479 L502 637 M525 485 L499 637" stroke="#333" fill="none" stroke-width="0.7" stroke-dasharray="3 1"/>
<path d="M456.7 489 L432.9 637" stroke="#0a0a0a" fill="none" stroke-width="1.2"/>
<path d="M492.4 490.7 L469.8 637" stroke="#0a0a0a" fill="none" stroke-width="1.2"/>
<path d="M466.2 490.7 L445 637" stroke="#333" fill="none" stroke-width="0.7" stroke-dasharray="3 1"/>
<path d="M466 489 L492 491" stroke="#222" fill="none" stroke-width="0.8" stroke-dasharray="2 1"/>
<path d="M463.8 550.2 H507.9 V637 M466 554 H500.7 V637" stroke="#0a0a0a" fill="none" stroke-width="1.6"/>
<path d="M463.8 550.2 L437 610 M466 554 L446 637" stroke="#0a0a0a" fill="none" stroke-width="1.2"/>
<rect x="476.4" y="575.2" width="4.8" height="40.5" rx="2.4" stroke="#0a0a0a" fill="none" stroke-width="1.6"/>
<rect x="505" y="576.4" width="3.3" height="34.6" rx="1.6" stroke="#0a0a0a" fill="none" stroke-width="1.4"/>
<rect x="436" y="577.6" width="37.3" height="34.5" stroke="#0a0a0a" fill="none" stroke-width="1.2"/>
<path d="M444 589 H472 M444 601.4 H472 M444 589 V601.4" stroke="#0a0a0a" fill="none" stroke-width="2"/>
<circle cx="456.7" cy="595" r="3" stroke="#0a0a0a" fill="none" stroke-width="1.6"/>
<path d="M423.3 558.6 Q431 595 423.3 630" stroke="#0a0a0a" fill="none" stroke-width="2"/>
<path d="M423.3 558.6 Q436 550 449.5 547.9 M423.3 630 Q436 640 446 641" stroke="#0a0a0a" fill="none" stroke-width="1.2"/>
<path d="M427 580 Q438 565 449 561 M427 612 Q438 625 449 630" stroke="#0a0a0a" fill="none" stroke-width="1"/>
<path d="M447 547.9 L443 637" stroke="#0a0a0a" fill="none" stroke-width="1.6"/>
<path d="M430 595 H440" stroke="#0a0a0a" fill="none" stroke-width="0.8"/>
<path d="M493.6 607.4 H538" stroke="#222" fill="none" stroke-width="0.8"/>
</g>
<path d="M9 76 H16 L19 79 V89 H9Z" fill="#fafafa" stroke="#3a3a3a" stroke-width="1"/><path d="M16 76 V79 H19" fill="none" stroke="#3a3a3a" stroke-width="0.8"/>
<path d="M25.5 79 H30 L31.5 80.5 H38 V88 H25.5Z" fill="#b89a20" stroke="#6b5a10" stroke-width="0.8"/>
<path d="M27 82.5 H40.5 L38 88 H25.5Z" fill="#f0d050" stroke="#8a7010" stroke-width="0.8"/>
<rect x="44.5" y="75.8" width="13.5" height="13.2" rx="1.5" fill="#a8a050" stroke="#505028" stroke-width="1"/>
<rect x="47" y="76.5" width="8.5" height="5.5" fill="#e8e8d8"/>
<rect x="47.5" y="83.5" width="7.5" height="5" fill="#3a3a28"/><rect x="49" y="84.5" width="4" height="3" fill="#c8c8b8"/>
<path d="M59 90 L59 86.5 L55.5 90Z" fill="#555"/>
<path d="M65 76 H73 V80 H65Z" fill="#f4f4f4" stroke="#555" stroke-width="0.8"/>
<path d="M62 80 H76 V87 H62Z" fill="#8a8a8a" stroke="#333" stroke-width="0.9"/>
<path d="M63 84 H75 M63 86 H75" stroke="#444" stroke-width="0.8"/>
<path d="M64 87 H74 V89 H64Z" fill="#666"/>
<path d="M83 78 H91 L94 81 V89 H83Z" fill="#fafafa" stroke="#222" stroke-width="1.1"/>
<path d="M89 77 Q92 75 95 77 L96 76 V80 H92 L93.5 78.5 Q92 77.5 90 78.5Z" fill="#333"/>
<path d="M103 76 L111 86 M111 76 L103 86" stroke="#888" stroke-width="1.1"/>
<circle cx="103.5" cy="87" r="1.6" fill="none" stroke="#888" stroke-width="0.9"/><circle cx="110.5" cy="87" r="1.6" fill="none" stroke="#888" stroke-width="0.9"/>
<path d="M121 76.5 H126 L128 78.5 V85 H121Z" fill="#f4f4f4" stroke="#333" stroke-width="1"/>
<path d="M124 80 H129 L131 82 V89 H124Z" fill="#fafafa" stroke="#333" stroke-width="1"/>
<rect x="139.5" y="77" width="9.5" height="12" rx="1.5" fill="#f0e480" stroke="#333" stroke-width="1.1"/>
<rect x="142" y="75.5" width="4.5" height="2.5" rx="1" fill="#555"/>
<path d="M158 83 Q162 76 169 81" fill="none" stroke="#111" stroke-width="2"/>
<path d="M155.5 83 L160.5 80 L160 85.5Z" fill="#111"/>
<path d="M171 90 L171 86.5 L167.5 90Z" fill="#555"/>
<path d="M177.5 83 V78.5 Q178.5 77 179.5 78.5 V76.8 Q180.5 75.3 181.5 76.8 V77.3 Q182.5 76 183.5 77.5 V79 Q184.5 78 185.5 79.5 V85 Q185 89 181 89 Q178.5 89 177 86.5 L174.5 83 Q174.5 81.5 176 82.3Z" fill="#fafafa" stroke="#333" stroke-width="0.9"/>
<path d="M179.5 78.5 V83 M181.5 77 V83 M183.5 78 V83" stroke="#333" stroke-width="0.7"/>
<ellipse cx="200" cy="82" rx="7" ry="3" fill="none" stroke="#aaa" stroke-width="0.9"/>
<ellipse cx="200" cy="82" rx="2.5" ry="7" fill="none" stroke="#aaa" stroke-width="0.9"/>
<circle cx="200" cy="82" r="1.8" fill="#111"/>
<circle cx="221" cy="79.5" r="4" fill="#f4f4f4" stroke="#333" stroke-width="1"/>
<path d="M218 82.5 L213 88" stroke="#222" stroke-width="1.6"/>
<path d="M219.5 79.5 H222.5 M221 78 V81" stroke="#333" stroke-width="0.7"/>
<rect x="233" y="76" width="10" height="10" fill="none" stroke="#888" stroke-width="0.8" stroke-dasharray="1 1"/>
<circle cx="238" cy="81" r="3.8" fill="#f4f4f4" stroke="#333" stroke-width="1"/>
<path d="M235.5 83.5 L231 88" stroke="#222" stroke-width="1.6"/>
<circle cx="256" cy="81.5" r="4.5" fill="none" stroke="#333" stroke-width="1"/>
<path d="M253 84.5 L249.5 88" stroke="#222" stroke-width="1.6"/>
<path d="M249 79 V76 H252 M259 76 H262.5 V79 M262.5 85 V88 H259" fill="none" stroke="#111" stroke-width="1.3"/>
<circle cx="276.5" cy="80" r="4.5" fill="#e8e040" stroke="#444" stroke-width="1"/>
<path d="M273.5 83 L269.5 88" stroke="#222" stroke-width="1.6"/>
<circle cx="294.5" cy="83" r="4" fill="#f4f4f4" stroke="#333" stroke-width="1"/>
<path d="M291.5 86 L288 89" stroke="#222" stroke-width="1.6"/>
<path d="M288 79 Q294 74 300 80" fill="none" stroke="#111" stroke-width="1.5"/>
<path d="M286.5 80.5 L289.5 76.5 L291 81Z" fill="#111"/>
<path d="M302 90 L302 86.5 L298.5 90Z" fill="#555"/>
<rect x="304.5" y="75.5" width="13" height="13" fill="#aaa" stroke="#333" stroke-width="1"/>
<path d="M311 75.5 V88.5 M304.5 82 H317.5" stroke="#333" stroke-width="1.4"/>
<path d="M319 90 L319 86.5 L315.5 90Z" fill="#555"/>
<path d="M324 84 Q324 81 327 80.5 L329 78.5 H333 L335 80.5 Q337 81 337 84Z" fill="#d82020"/>
<circle cx="327" cy="85" r="1.2" fill="#222"/><circle cx="334" cy="85" r="1.2" fill="#222"/>
<path d="M338 90 L338 86.5 L334.5 90Z" fill="#555"/>
<path d="M343 80 L350 77 L356 82 L349 86Z" fill="#e0e0e0" stroke="#aaa" stroke-width="0.6"/>
<path d="M346 82 H352 M347 80 V84" stroke="#222" stroke-width="1.2"/><circle cx="352" cy="82" r="1" fill="#c33"/>
<path d="M357 90 L357 86.5 L353.5 90Z" fill="#555"/>
<circle cx="367.5" cy="82" r="6" fill="none" stroke="#888" stroke-width="0.9"/>
<path d="M367.5 82 H374" stroke="#555" stroke-width="0.9"/><circle cx="367.5" cy="82" r="1" fill="#444"/>
<path d="M375 90 L375 86.5 L371.5 90Z" fill="#555"/>
<circle cx="384" cy="79" r="2.8" fill="#e8d040" stroke="#a08a20" stroke-width="0.5"/>
<rect x="388" y="78" width="5" height="5" fill="#e8d040" stroke="#a08a20" stroke-width="0.5"/>
<path d="M381 88 L384 83 L387 88Z" fill="#f0e080" stroke="#a08a20" stroke-width="0.5"/>
<path d="M391 76 H393.5 V78.5" fill="none" stroke="#222" stroke-width="0.8"/>
<path d="M379 90 L379 86.5 L375.5 90Z" fill="#555"/>
<path d="M394 90 L394 86.5 L390.5 90Z" fill="#555"/>
<path d="M401 84 Q399 81 399.5 79 Q400.5 75.5 404.5 75.5 Q408.5 75.5 409.5 79 Q410 81 408 84 V86 H401Z" fill="#c8c8c8" stroke="#888" stroke-width="0.8"/>
<rect x="402" y="86" width="5" height="3" fill="#777"/>
<path d="M412 90 L412 86.5 L408.5 90Z" fill="#555"/>
<path d="M420.5 82 V79 Q420.5 76 423.5 76 Q426.5 76 426.5 79 V82" fill="none" stroke="#666" stroke-width="1.3"/>
<rect x="419" y="81.5" width="9" height="7.5" fill="#aaa" stroke="#666" stroke-width="0.8"/>
<path d="M420 84 H427 M420 86 H427" stroke="#ddd" stroke-width="0.6"/>
<path d="M431 90 L431 86.5 L427.5 90Z" fill="#555"/>
<path d="M436 80 L443 76 L448 80 L446 86 L440 88 L436 85Z" fill="#e04020"/>
<path d="M436 80 L444 82 L448 80 L446 86 L440 88 L436 85Z" fill="#f07040"/>
<path d="M436 85 L440 88 L446 86 L446 87.5 L440 89.5 L436 86.5Z" fill="#2040a0"/>
<path d="M450 90 L450 86.5 L446.5 90Z" fill="#555"/>
<defs><linearGradient id="cw" x1="0" y1="0" x2="1" y2="1"><stop offset="0" stop-color="#e02020"/><stop offset="0.3" stop-color="#e0c020"/><stop offset="0.55" stop-color="#20c040"/><stop offset="0.8" stop-color="#2060e0"/><stop offset="1" stop-color="#c020c0"/></linearGradient>
<radialGradient id="sg" cx="0.35" cy="0.35" r="0.7"><stop offset="0" stop-color="#fafafa"/><stop offset="0.6" stop-color="#a0a0a0"/><stop offset="1" stop-color="#505050"/></radialGradient>
<radialGradient id="sb" cx="0.35" cy="0.35" r="0.7"><stop offset="0" stop-color="#9ab0ff"/><stop offset="0.5" stop-color="#2040c0"/><stop offset="1" stop-color="#0a1860"/></radialGradient></defs>
<circle cx="460" cy="82" r="5.3" fill="none" stroke="url(#cw)" stroke-width="3"/>
<path d="M469 90 L469 86.5 L465.5 90Z" fill="#555"/>
<circle cx="479" cy="82" r="6" fill="url(#sg)"/><path d="M473 82 H485 M479 76 V88" stroke="#333" stroke-width="0.6"/>
<rect x="490.5" y="75.5" width="13" height="13" fill="none" stroke="#bbb" stroke-width="0.6" stroke-dasharray="1 1"/>
<circle cx="497" cy="82" r="6" fill="url(#sg)"/><path d="M491 82 H503 M497 76 V88" stroke="#333" stroke-width="0.6"/>
<path d="M506 90 L506 86.5 L502.5 90Z" fill="#555"/>
<circle cx="515.7" cy="82" r="6" fill="url(#sb)"/>
<path d="M525 90 L525 86.5 L521.5 90Z" fill="#555"/>
<path d="M533 77 L541.5 75.5 L539 84Z" fill="#f0a020" stroke="#a06010" stroke-width="0.5"/>
<path d="M543 90 L543 86.5 L539.5 90Z" fill="#555"/>
<circle cx="553" cy="82" r="5.5" fill="#e0c850" stroke="#806a20" stroke-width="1.5" stroke-dasharray="2 1.2"/><circle cx="553" cy="82" r="2" fill="#f4f4f4" stroke="#806a20" stroke-width="0.8"/>
<path d="M562 90 L562 86.5 L558.5 90Z" fill="#555"/>
<path d="M566 76 H570 M566 76 V83 M571 83 V88 H579 M579 84 V88" fill="none" stroke="#222" stroke-width="1.2"/>
<rect x="569.5" y="75" width="2" height="2" fill="#111"/><rect x="578" y="83" width="2" height="2" fill="#111"/>
<circle cx="590.5" cy="82" r="6.5" fill="url(#sb)"/>
<text x="590.5" y="86" text-anchor="middle" font-family="Liberation Sans" font-weight="bold" font-size="10" fill="#fff">?</text>
<path d="M599 90 L599 86.5 L595.5 90Z" fill="#555"/>
<rect x="601.5" y="75.5" width="15" height="13" fill="#d8dcd0"/>
<path d="M601.5 84 Q608 81 616.5 82.5 V88.5 H601.5Z" fill="#4a6a30"/><path d="M601.5 86 Q609 84 616.5 86 V88.5 H601.5Z" fill="#222"/>
<path d="M6 106.2 L6 115.2 L8.5 113.2 L10.5 117.2 L12 116.2 L10 112.7 L13 112.7Z" fill="#f8f8f8" stroke="#333" stroke-width="0.8"/>
<circle cx="28.3" cy="111.7" r="1.5" fill="none" stroke="#555" stroke-width="0.8"/>
<path d="M37 119.7 L37 116.2 L33.5 119.7Z" fill="#555"/>
<path d="M5 135.8 L8.5 124.80000000000001 L14 131.8" fill="none" stroke="#222" stroke-width="0.9"/>
<circle cx="5" cy="135.8" r="1" fill="#222"/><circle cx="8.5" cy="124.80000000000001" r="1" fill="#222"/><circle cx="14" cy="131.8" r="1" fill="#222"/>
<path d="M17.5 138.3 L17.5 134.8 L14.0 138.3Z" fill="#555"/>
<path d="M23 125.80000000000001 H30 Q35 125.80000000000001 35 130.3 Q35 134.8 30 134.8 H23" fill="none" stroke="#333" stroke-width="0.9"/>
<rect x="22" y="124.80000000000001" width="2" height="2" fill="none" stroke="#222" stroke-width="0.7"/><rect x="22" y="133.8" width="2" height="2" fill="none" stroke="#222" stroke-width="0.7"/><rect x="32" y="123.80000000000001" width="2" height="2" fill="none" stroke="#222" stroke-width="0.7"/>
<path d="M37 138.3 L37 134.8 L33.5 138.3Z" fill="#555"/>
<circle cx="9.6" cy="148.4" r="6.3" fill="none" stroke="#333" stroke-width="0.9"/><path d="M9.6 148.4 L13.5 144.4" stroke="#222" stroke-width="0.9"/><circle cx="9.6" cy="148.4" r="1" fill="#222"/>
<path d="M17.5 156.9 L17.5 153.4 L14.0 156.9Z" fill="#555"/>
<ellipse cx="28.3" cy="148.9" rx="6.4" ry="4.2" fill="none" stroke="#333" stroke-width="0.9"/><rect x="27.3" y="147.9" width="2" height="2" fill="none" stroke="#222" stroke-width="0.7"/><rect x="27.3" y="143.9" width="2" height="2" fill="none" stroke="#222" stroke-width="0.7"/>
<path d="M37 156.9 L37 153.4 L33.5 156.9Z" fill="#555"/>
<path d="M5 161.0 Q15 163.0 16 167.5 L5 172.5Z" fill="none" stroke="#333" stroke-width="0.9"/>
<path d="M17.5 175.5 L17.5 172.0 L14.0 175.5Z" fill="#555"/>
<rect x="22.6" y="163.5" width="12" height="7.7" fill="none" stroke="#333" stroke-width="0.9"/>
<path d="M37 175.5 L37 172.0 L33.5 175.5Z" fill="#555"/>
<path d="M7.5 181.10000000000002 H12.5 L15 185.60000000000002 L12.5 190.10000000000002 H7.5 L5 185.60000000000002Z" fill="none" stroke="#444" stroke-width="0.9"/><path d="M10 185.60000000000002 H14" stroke="#333" stroke-width="0.8"/>
<path d="M17.5 194.10000000000002 L17.5 190.60000000000002 L14.0 194.10000000000002Z" fill="#555"/>
<path d="M23 180.60000000000002 H27 Q33 180.60000000000002 33 187.60000000000002 V191.60000000000002" fill="none" stroke="#222" stroke-width="1.6"/><rect x="32" y="190.60000000000002" width="3" height="3" fill="#555"/>
<path d="M5.5 208.2 L8 199.2 L15 200.2 L13 210.2Z" fill="#8a9af0" stroke="#333" stroke-width="0.7"/><path d="M7 204.2 L14 205.2 M10.5 199.7 L9.5 209.2" stroke="#4050a0" stroke-width="0.6"/>
<path d="M17.5 212.7 L17.5 209.2 L14.0 212.7Z" fill="#555"/>
<path d="M22 202.2 Q27 197.2 33 201.2 L35 209.2 Q31 205.2 28 210.2Z" fill="#f0f0f8" stroke="#444" stroke-width="0.7"/><path d="M28 210.2 Q31 205.2 35 209.2 L33 201.2 Q30 200.2 27 202.2Z" fill="#3a4fc0" opacity="0.8"/>
<path d="M37 212.7 L37 209.2 L33.5 212.7Z" fill="#555"/>
<path d="M4.5 219.8 L9 216.8 L15 218.8 V226.8 L10 229.3 L4.5 226.8Z" fill="#3a4fc0"/><path d="M4.5 219.8 L10 221.8 L15 218.8 L9 216.8Z" fill="#a8b8ff"/><path d="M10 221.8 V229.3" stroke="#223" stroke-width="0.5"/>
<path d="M17.5 231.3 L17.5 227.8 L14.0 231.3Z" fill="#555"/>
<circle cx="31" cy="220.3" r="4.5" fill="#5a6ae0"/><circle cx="26" cy="225.3" r="4.8" fill="#3a4fc0"/><path d="M21.5 225.3 H30.5 M26 220.8 V229.8" stroke="#aab" stroke-width="0.5"/>
<path d="M37 231.3 L37 227.8 L33.5 231.3Z" fill="#555"/>
<ellipse cx="9.8" cy="236.40000000000003" rx="3.5" ry="1.3" fill="none" stroke="#555" stroke-width="0.7"/><path d="M4 239.90000000000003 Q10 242.40000000000003 16 239.90000000000003 V245.90000000000003 Q10 248.40000000000003 4 245.90000000000003Z" fill="#3a4fc0"/><ellipse cx="9.8" cy="243.40000000000003" rx="3.5" ry="1.6" fill="#c0c8ff"/>
<path d="M17.5 249.90000000000003 L17.5 246.40000000000003 L14.0 249.90000000000003Z" fill="#555"/>
<path d="M22 244.40000000000003 L28 235.40000000000003 L36 239.40000000000003 L30 247.40000000000003Z" fill="#5a6ad8" stroke="#223" stroke-width="0.6"/><path d="M25 241.40000000000003 L33 243.40000000000003 M29 237.40000000000003 L27 245.40000000000003" stroke="#c0c8ff" stroke-width="0.6"/>
<path d="M37 249.90000000000003 L37 246.40000000000003 L33.5 249.90000000000003Z" fill="#555"/>
<path d="M4 258.0 L7 254.0 L11 256.0 L10 261.0 L6 262.0Z" fill="#e8a020"/><path d="M9 261.0 L13 259.0 L16 263.0 L13 266.0 L10 264.0Z" fill="#f8f8f8" stroke="#666" stroke-width="0.6"/>
<path d="M22 266.0 L24 257.0 L28 261.0 L35 254.0 L31 263.0 L36 265.0 L29 265.0 L27 267.0Z" fill="#f0b020"/>
<path d="M4 279.6 H12 L10 272.6 H13 L15 279.6 V282.6 H4Z" fill="#f4f4f8" stroke="#333" stroke-width="0.7"/><path d="M10 272.6 H13 L12 279.6 H10Z" fill="#3a4fc0"/><path d="M11 281.6 L16 285.6" stroke="#888" stroke-width="1.4"/>
<path d="M22 279.6 H36 V282.6 H22Z" fill="#f4f4f8" stroke="#333" stroke-width="0.7"/><path d="M28 272.6 H32 L31 279.6 H28Z" fill="#3a4fc0"/>
<path d="M37 287.1 L37 283.6 L33.5 287.1Z" fill="#555"/>
<circle cx="10" cy="294.2" r="3" fill="#8070d0"/><circle cx="7.5" cy="298.7" r="3" fill="#f8f8f8" stroke="#333" stroke-width="0.6"/><circle cx="12.5" cy="298.7" r="3" fill="#281870"/>
<path d="M17.5 305.7 L17.5 302.2 L14.0 305.7Z" fill="#555"/>
<circle cx="28.5" cy="293.7" r="2.5" fill="#9080e0"/><circle cx="25" cy="299.2" r="2.5" fill="#f8f8f8" stroke="#555" stroke-width="0.6"/><circle cx="32" cy="299.2" r="2.5" fill="#201060"/>
<path d="M5 311.8 Q12 311.8 13 318.8" fill="none" stroke="#333" stroke-width="1"/><path d="M11.5 317.8 L13 321.8 L14.5 317.8" fill="none" stroke="#333" stroke-width="0.8"/><circle cx="6" cy="311.8" r="1.2" fill="none" stroke="#333" stroke-width="0.7"/>
<path d="M23 311.8 Q32 312.8 33 319.8" fill="none" stroke="#333" stroke-width="1"/><path d="M22 313.8 Q30 314.8 31 320.8" fill="none" stroke="#666" stroke-width="0.6" stroke-dasharray="1 1"/>
<path d="M37 324.3 L37 320.8 L33.5 324.3Z" fill="#555"/>
<path d="M4 328.40000000000003 H15 V331.90000000000003 H11.5 V340.40000000000003 H7.5 V331.90000000000003 H4Z" fill="#5a6ae0" stroke="#223090" stroke-width="0.8"/>
<rect x="22.5" y="334.90000000000003" width="4.5" height="4.5" fill="#f8f8f8" stroke="#555" stroke-width="0.6"/><rect x="30" y="328.40000000000003" width="4.5" height="4.5" fill="#7a8af0" stroke="#555" stroke-width="0.6"/><path d="M26 335.40000000000003 L31 332.40000000000003" stroke="#333" stroke-width="0.7"/>
<path d="M37 342.90000000000003 L37 339.40000000000003 L33.5 342.90000000000003Z" fill="#555"/>
<rect x="5" y="347.0" width="4" height="3.5" fill="#7a8af0" stroke="#555" stroke-width="0.5"/><rect x="11" y="350.0" width="4" height="3.5" fill="#7a8af0" stroke="#555" stroke-width="0.5"/><rect x="5" y="354.0" width="4" height="3.5" fill="#f8f8f8" stroke="#555" stroke-width="0.5"/><rect x="11" y="356.0" width="4" height="3.5" fill="#7a8af0" stroke="#555" stroke-width="0.5"/><rect x="8" y="351.0" width="3" height="3" fill="#3a4ac0"/>
<rect x="22" y="348.0" width="3.5" height="9" fill="#f8f8f8" stroke="#444" stroke-width="0.6"/><path d="M26 358.0 L34 352.0 L36 354.0 L28 360.0Z" fill="#5a6ae0" stroke="#334" stroke-width="0.5"/>
<path d="M4 368.6 L9 365.6 L15.5 368.1 V375.6 L10 378.1 L4 375.6Z" fill="#3a4fc0"/><path d="M4 368.6 L10 371.1 L15.5 368.1 L9 365.6Z" fill="#b0c0ff"/><path d="M7 373.6 H11 V377.6 H7Z" fill="#fff"/>
<path d="M17.5 380.1 L17.5 376.6 L14.0 380.1Z" fill="#555"/>
<path d="M22 375.6 L24 372.6 H36 L34 375.6Z" fill="#4a5ac8" stroke="#223" stroke-width="0.5"/><path d="M25 371.6 V366.6 M28 371.6 V366.6 M31 371.6 V366.6" stroke="#888" stroke-width="0.8"/>
<path d="M37 380.1 L37 376.6 L33.5 380.1Z" fill="#555"/>
<rect x="4.5" y="384.7" width="3.2" height="3" fill="#7880b8" stroke="#404060" stroke-width="0.6"/><rect x="5.5" y="385.7" width="1.2" height="1" fill="#fff"/><rect x="4.5" y="388.7" width="3.2" height="3" fill="#7880b8" stroke="#404060" stroke-width="0.6"/><rect x="5.5" y="389.7" width="1.2" height="1" fill="#fff"/><rect x="4.5" y="392.7" width="3.2" height="3" fill="#7880b8" stroke="#404060" stroke-width="0.6"/><rect x="5.5" y="393.7" width="1.2" height="1" fill="#fff"/><rect x="8.5" y="384.7" width="3.2" height="3" fill="#7880b8" stroke="#404060" stroke-width="0.6"/><rect x="9.5" y="385.7" width="1.2" height="1" fill="#fff"/><rect x="8.5" y="388.7" width="3.2" height="3" fill="#7880b8" stroke="#404060" stroke-width="0.6"/><rect x="9.5" y="389.7" width="1.2" height="1" fill="#fff"/><rect x="8.5" y="392.7" width="3.2" height="3" fill="#7880b8" stroke="#404060" stroke-width="0.6"/><rect x="9.5" y="393.7" width="1.2" height="1" fill="#fff"/><rect x="12.5" y="384.7" width="3.2" height="3" fill="#7880b8" stroke="#404060" stroke-width="0.6"/><rect x="13.5" y="385.7" width="1.2" height="1" fill="#fff"/><rect x="12.5" y="388.7" width="3.2" height="3" fill="#7880b8" stroke="#404060" stroke-width="0.6"/><rect x="13.5" y="389.7" width="1.2" height="1" fill="#fff"/><rect x="12.5" y="392.7" width="3.2" height="3" fill="#7880b8" stroke="#404060" stroke-width="0.6"/><rect x="13.5" y="393.7" width="1.2" height="1" fill="#fff"/>
<path d="M17.5 398.7 L17.5 395.2 L14.0 398.7Z" fill="#555"/>
<path d="M28 384.2 V396.2" stroke="#c02020" stroke-width="1.2"/><rect x="26" y="386.2" width="4" height="3" fill="none" stroke="#c02020" stroke-width="0.8"/><rect x="26" y="391.2" width="4" height="3" fill="none" stroke="#c02020" stroke-width="0.8"/>
<path d="M37 398.7 L37 395.2 L33.5 398.7Z" fill="#555"/>
<path d="M4 404.8 L7 402.8 V412.8 L4 413.8Z" fill="#f8f8f8" stroke="#555" stroke-width="0.6"/><path d="M9 403.8 L14 405.8 L11 414.8 L7 413.8Z" fill="#6a7ae8" stroke="#334" stroke-width="0.6"/>
<path d="M17.5 417.3 L17.5 413.8 L14.0 417.3Z" fill="#555"/>
<path d="M23 408.8 L26 412.8 L34 403.8" fill="none" stroke="#111" stroke-width="1.6"/>
<path d="M37 417.3 L37 413.8 L33.5 417.3Z" fill="#555"/>
<path d="M3 427.40000000000003 L6 423.40000000000003 L11 424.40000000000003 V430.40000000000003 L6 431.40000000000003 L3 429.40000000000003Z" fill="#bbb" stroke="#555" stroke-width="0.6"/><path d="M10 431.40000000000003 L12 424.40000000000003 L15 431.40000000000003Z" fill="#999" stroke="#555" stroke-width="0.6"/>
<path d="M17.5 435.90000000000003 L17.5 432.40000000000003 L14.0 435.90000000000003Z" fill="#555"/>
<path d="M23 430.40000000000003 L29 424.40000000000003 L34 429.40000000000003 L29 432.40000000000003Z" fill="#f0b030" stroke="#806010" stroke-width="0.6"/><path d="M27 422.40000000000003 L32 420.40000000000003 H35 V422.40000000000003Z" fill="#777"/>
<path d="M37 435.90000000000003 L37 432.40000000000003 L33.5 435.90000000000003Z" fill="#555"/>
<path d="M2 101 H42" stroke="#c8c8d0" stroke-width="1.5"/>
<path d="M2 516.5 H42" stroke="#c8c8d0" stroke-width="1.5"/>
<rect x="7.3" y="522.5" width="9.5" height="12" fill="#f4f4f4" stroke="#1a1a1a" stroke-width="1"/><path d="M8.75 527.5 Q8.55 524.0 12.05 524.3 Q15.55 524.0 15.350000000000001 527.5 L14.55 526.0 H9.55Z" fill="#1a1a1a"/><path d="M9.05 527.5 Q9.05 533.0 12.05 533.0 Q15.05 533.0 15.05 527.5" fill="none" stroke="#333" stroke-width="0.7"/><rect x="9.850000000000001" y="527.7" width="1.4" height="1" fill="#222"/><rect x="12.850000000000001" y="527.7" width="1.4" height="1" fill="#222"/><path d="M10.55 531.0 H13.55" stroke="#444" stroke-width="0.8"/>
<path d="M6 526 Q3 529 6 532" fill="none" stroke="#888" stroke-width="0.7"/>
<circle cx="28.4" cy="528.2" r="6" fill="#d02020"/><circle cx="28.4" cy="528.2" r="3.8" fill="#eee"/><path d="M25 532 L32 525" stroke="#d02020" stroke-width="1.4"/><path d="M26 527 Q28.4 524 31 527 V529 H26Z" fill="#333"/>
<rect x="3" y="541" width="5" height="12" fill="none" stroke="#bbb" stroke-width="0.6"/>
<rect x="7.3" y="540" width="9.5" height="12" fill="#f4f4f4" stroke="#1a1a1a" stroke-width="1"/><path d="M8.75 545 Q8.55 541.5 12.05 541.8 Q15.55 541.5 15.350000000000001 545 L14.55 543.5 H9.55Z" fill="#1a1a1a"/><path d="M9.05 545 Q9.05 550.5 12.05 550.5 Q15.05 550.5 15.05 545" fill="none" stroke="#333" stroke-width="0.7"/><rect x="9.850000000000001" y="545.2" width="1.4" height="1" fill="#222"/><rect x="12.850000000000001" y="545.2" width="1.4" height="1" fill="#222"/><path d="M10.55 548.5 H13.55" stroke="#444" stroke-width="0.8"/>
<rect x="22.3" y="539.6" width="12.3" height="13.9" fill="#e8e8e8" stroke="#888" stroke-width="0.7"/>
<rect x="24" y="540.5" width="10" height="12" fill="#f4f4f4" stroke="#1a1a1a" stroke-width="1"/><path d="M25.7 545.5 Q25.5 542.0 29.0 542.3 Q32.5 542.0 32.3 545.5 L31.5 544.0 H26.5Z" fill="#1a1a1a"/><path d="M26.0 545.5 Q26.0 551.0 29.0 551.0 Q32.0 551.0 32.0 545.5" fill="none" stroke="#333" stroke-width="0.7"/><rect x="26.8" y="545.7" width="1.4" height="1" fill="#222"/><rect x="29.8" y="545.7" width="1.4" height="1" fill="#222"/><path d="M27.5 549.0 H30.5" stroke="#444" stroke-width="0.8"/>
<path d="M3.5 558 V572" stroke="#5a5" stroke-width="0.8"/>
<rect x="4.5" y="559.5" width="11" height="12" fill="#f4f4f4" stroke="#1a1a1a" stroke-width="1"/><path d="M6.7 564.5 Q6.5 561.0 10.0 561.3 Q13.5 561.0 13.3 564.5 L12.5 563.0 H7.5Z" fill="#1a1a1a"/><path d="M7.0 564.5 Q7.0 570.0 10.0 570.0 Q13.0 570.0 13.0 564.5" fill="none" stroke="#333" stroke-width="0.7"/><rect x="7.8" y="564.7" width="1.4" height="1" fill="#222"/><rect x="10.8" y="564.7" width="1.4" height="1" fill="#222"/><path d="M8.5 568.0 H11.5" stroke="#444" stroke-width="0.8"/>
<path d="M3 572.5 H17" stroke="#d33" stroke-width="0.8"/><rect x="3" y="571" width="2.5" height="2.5" fill="#333"/><rect x="12" y="571" width="2.5" height="2.5" fill="#333"/>
<rect x="24" y="559" width="9" height="12" fill="#f4f4f4" stroke="#aaa" stroke-width="0.6"/><path d="M25.5 563 Q28.5 560 32 562 V565 H25.5Z" fill="#333"/>
</svg>
<div class="a m" style="left:10.7px;top:63.5px;font-size:8px;letter-spacing:-0.8px;line-height:9px;color:#111">Standard</div>
<div class="a m" style="left:55.5px;top:63.5px;font-size:8px;letter-spacing:-0.8px;line-height:9px;color:#111">CPlanes</div>
<div class="a m" style="left:96.8px;top:63.5px;font-size:8px;letter-spacing:-0.8px;line-height:9px;color:#111">Set View</div>
<div class="a m" style="left:142px;top:63.5px;font-size:8px;letter-spacing:-0.8px;line-height:9px;color:#111">Display</div>
<div class="a m" style="left:183.8px;top:63.5px;font-size:8px;letter-spacing:-0.8px;line-height:9px;color:#111">Select</div>
<div class="a m" style="left:221px;top:63.5px;font-size:8px;letter-spacing:-0.8px;line-height:9px;color:#111">Viewport Layout</div>
<div class="a m" style="left:293.7px;top:63.5px;font-size:8px;letter-spacing:-0.8px;line-height:9px;color:#111">Visibility</div>
<div class="a m" style="left:346.8px;top:63.5px;font-size:8px;letter-spacing:-0.8px;line-height:9px;color:#111">Transform</div>
<div class="a m" style="left:395.5px;top:63.5px;font-size:8px;letter-spacing:-0.8px;line-height:9px;color:#111">Curve Tools</div>
<div class="a m" style="left:453.8px;top:63.5px;font-size:8px;letter-spacing:-0.8px;line-height:9px;color:#111">Surface Tools</div>
<div class="a m" style="left:518.3px;top:63.5px;font-size:8px;letter-spacing:-0.8px;line-height:9px;color:#111">Solid Tools</div>
<div class="a m" style="left:574.7px;top:63.5px;font-size:8px;letter-spacing:-0.8px;line-height:9px;color:#111">Mesh Tools</div>
<div class="a m" style="left:628.3px;top:63.5px;font-size:8px;letter-spacing:-0.8px;line-height:9px;color:#111">Drafting</div>
<div class="a m" style="left:674.2px;top:63.5px;font-size:8px;letter-spacing:-0.8px;line-height:9px;color:#111">Render Tools</div>
<div class="a m" style="left:734.8px;top:63.5px;font-size:8px;letter-spacing:-0.8px;line-height:9px;color:#111">New in V5</div>
<div class="a m" style="left:53.3px;top:638px;font-size:8px;letter-spacing:-0.8px;line-height:9px;color:#111">Right</div>
<div class="a m" style="left:86px;top:638px;font-size:8px;letter-spacing:-0.8px;line-height:9px;color:#111">Top</div>
<div class="a m" style="left:111.4px;top:638px;font-size:8px;letter-spacing:-0.8px;line-height:9px;color:#111">Front</div>
<div class="a m" style="left:144px;top:638px;font-size:8px;letter-spacing:-0.8px;line-height:9px;color:#111">Perspective</div>
<div class="a m" style="left:16.5px;top:656.4px;font-size:8.4px;letter-spacing:-1.04px;line-height:9px;color:#111;font-weight:bold">End</div>
<div class="a m" style="left:43.6px;top:656.4px;font-size:8.4px;letter-spacing:-1.04px;line-height:9px;color:#111;font-weight:bold">Near</div>
<div class="a m" style="left:74.6px;top:656.4px;font-size:8.4px;letter-spacing:-1.04px;line-height:9px;color:#111;font-weight:bold">Point</div>
<div class="a m" style="left:109.4px;top:656.4px;font-size:8.4px;letter-spacing:-1.04px;line-height:9px;color:#111;font-weight:bold">Mid</div>
<div class="a m" style="left:136.8px;top:656.4px;font-size:8.4px;letter-spacing:-1.04px;line-height:9px;color:#111;font-weight:bold">Cen</div>
<div class="a m" style="left:164.6px;top:656.4px;font-size:8.4px;letter-spacing:-1.04px;line-height:9px;color:#111;font-weight:bold">Int</div>
<div class="a m" style="left:191.6px;top:656.4px;font-size:8.4px;letter-spacing:-1.04px;line-height:9px;color:#111;font-weight:bold">Perp</div>
<div class="a m" style="left:222.8px;top:656.4px;font-size:8.4px;letter-spacing:-1.04px;line-height:9px;color:#111;font-weight:bold">Tan</div>
<div class="a m" style="left:249.7px;top:656.4px;font-size:8.4px;letter-spacing:-1.04px;line-height:9px;color:#111;font-weight:bold">Quad</div>
<div class="a m" style="left:281.5px;top:656.4px;font-size:8.4px;letter-spacing:-1.04px;line-height:9px;color:#111;font-weight:bold">Knot</div>
<div class="a m" style="left:312.1px;top:656.4px;font-size:8.4px;letter-spacing:-1.04px;line-height:9px;color:#111;font-weight:bold">Vertex</div>
<div class="a m" style="left:351.3px;top:656.4px;font-size:8.4px;letter-spacing:-1.04px;line-height:9px;color:#111;font-weight:bold">Project</div>
<div class="a m" style="left:394.7px;top:656.4px;font-size:8.4px;letter-spacing:-1.04px;line-height:9px;color:#111;font-weight:bold">Disable</div>
<div class="a" style="left:47px;top:98px;width:38px;height:10px;background:#a9bcd6"></div>
<div class="a m" style="left:51.5px;top:98.5px;font-size:8px;letter-spacing:-0.8px;line-height:9px;color:#222">Right</div>
<div class="a" style="left:76px;top:99px;width:1px;height:9px;background:#333"></div>
<div class="a" style="left:78.5px;top:102px;width:0;height:0;border-left:2.5px solid transparent;border-right:2.5px solid transparent;border-top:3px solid #222"></div>
</body></html>
